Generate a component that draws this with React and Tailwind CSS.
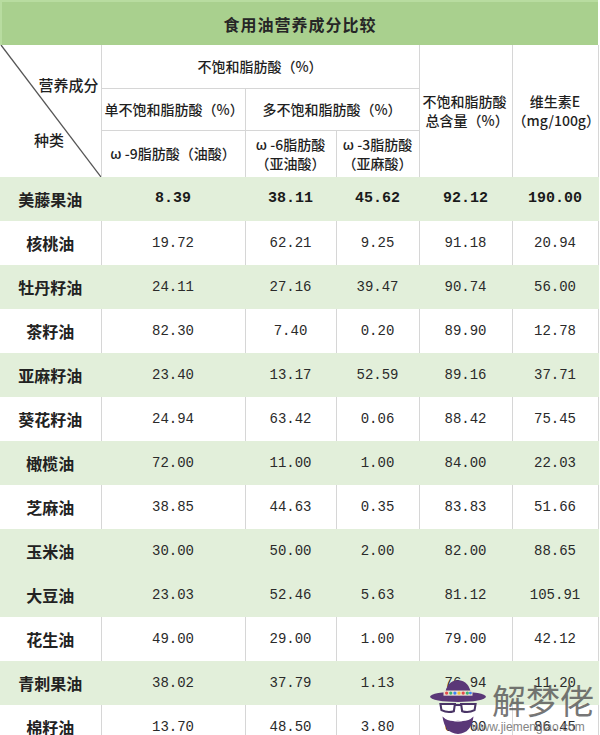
const rows = [
  ['美藤果油', '8.39', '38.11', '45.62', '92.12', '190.00'],
  ['核桃油', '19.72', '62.21', '9.25', '91.18', '20.94'],
  ['牡丹籽油', '24.11', '27.16', '39.47', '90.74', '56.00'],
  ['茶籽油', '82.30', '7.40', '0.20', '89.90', '12.78'],
  ['亚麻籽油', '23.40', '13.17', '52.59', '89.16', '37.71'],
  ['葵花籽油', '24.94', '63.42', '0.06', '88.42', '75.45'],
  ['橄榄油', '72.00', '11.00', '1.00', '84.00', '22.03'],
  ['芝麻油', '38.85', '44.63', '0.35', '83.83', '51.66'],
  ['玉米油', '30.00', '50.00', '2.00', '82.00', '88.65'],
  ['大豆油', '23.03', '52.46', '5.63', '81.12', '105.91'],
  ['花生油', '49.00', '29.00', '1.00', '79.00', '42.12'],
  ['青刺果油', '38.02', '37.79', '1.13', '76.94', '11.20'],
  ['棉籽油', '13.70', '48.50', '3.80', '66.00', '86.45'],
]

// rows with the light green band
const green = [0, 2, 4, 6, 8, 9, 11]

const cjk = { fontFamily: '"Noto Sans CJK SC", "Noto Sans", sans-serif' }
const mono = { fontFamily: '"Liberation Mono", "Noto Sans CJK SC", monospace' }

function Watermark() {
  return (
    <div className="absolute right-[6px] bottom-0 flex items-end gap-1 pointer-events-none">
      <svg width="60" height="60" viewBox="0 0 58 58">
        {/* hat */}
        <path d="M16 20 Q18 5 29 5 Q40 5 42 20 Z" fill="#5a3777" />
        <ellipse cx="29" cy="21" rx="27" ry="5" fill="#5a3777" />
        <rect x="15" y="15" width="28" height="5" fill="#e9e0d0" />
        <circle cx="18" cy="17.5" r="1.6" fill="#e64b4b" />
        <circle cx="22" cy="17.5" r="1.6" fill="#3cb371" />
        <circle cx="26" cy="17.5" r="1.6" fill="#3b82f6" />
        <circle cx="30" cy="17.5" r="1.6" fill="#f2c230" />
        <circle cx="34" cy="17.5" r="1.6" fill="#e64b4b" />
        <circle cx="38" cy="17.5" r="1.6" fill="#3cb371" />
        <circle cx="41" cy="17.5" r="1.4" fill="#3b82f6" />
        {/* glasses */}
        <path d="M12 28 L26 28 L25 35 Q19 37 13 34 Z" fill="none" stroke="#4a3566" strokeWidth="2" />
        <path d="M32 28 L46 28 L45 34 Q39 37 33 35 Z" fill="none" stroke="#4a3566" strokeWidth="2" />
        <path d="M26 29 L32 29" stroke="#4a3566" strokeWidth="2" />
        {/* beard */}
        <path d="M14 40 Q16 56 29 57 Q42 56 44 40 Q38 46 29 44 Q20 46 14 40 Z" fill="#5a3777" />
        <path d="M23 44 Q29 40 35 44 Q29 47 23 44 Z" fill="#ffffff" opacity="0.6" />
      </svg>
      <div className="flex flex-col items-start">
        <span className="text-[34px] leading-[38px] text-[#555] opacity-80" style={cjk}>解梦佬</span>
        <span className="text-[12px] leading-[16px] text-[#777] opacity-90 -ml-[20px]" style={{ fontFamily: '"Liberation Sans", sans-serif' }}>
          www.jiemenglao.com
        </span>
      </div>
    </div>
  )
}

export default function App() {
  const line = 'border-[#d6d6d6]'
  const head = 'text-[14px] font-medium text-[#1f1f1f]'

  return (
    <div className="relative w-[600px] h-[735px] overflow-hidden bg-white text-[#262626]">
      <div className="w-[598px] h-[45px] bg-[#a9d08e] border-l-[2px] border-t-[2px] border-[#b8dca0] flex items-center justify-center">
        <span className="text-[16px] font-bold tracking-[1px]" style={cjk}>食用油营养成分比较</span>
      </div>

      <table className="w-[598px] table-fixed border-collapse" style={cjk}>
        <colgroup>
          <col className="w-[101px]" />
          <col className="w-[144px]" />
          <col className="w-[91px]" />
          <col className="w-[83px]" />
          <col className="w-[93px]" />
          <col className="w-[86px]" />
        </colgroup>
        <thead>
          <tr className="h-[43px]">
            <th rowSpan={3} className={`relative p-0 border-r ${line} align-top font-medium`}>
              <svg className="absolute inset-0" width="101" height="132" viewBox="0 0 101 132">
                <line x1="1" y1="0" x2="101" y2="132" stroke="#555" strokeWidth="1.3" />
              </svg>
              <div className="relative flex flex-col text-[15px] text-[#1f1f1f]">
                <span className="self-end pr-[2px] pt-[30px] leading-[20px]">营养成分</span>
                <span className="self-start pl-[34px] pt-[35px] leading-[20px]">种类</span>
              </div>
            </th>
            <th colSpan={3} className={`border-b border-r ${line} ${head}`}>不饱和脂肪酸（%）</th>
            <th rowSpan={3} className={`border-r ${line} ${head} leading-[19px] text-left pl-[3px]`}>
              不饱和脂肪酸<br />
              <span className="pl-[3px]">总含量（%）</span>
            </th>
            <th rowSpan={3} className={`border-r ${line} ${head} leading-[19px]`}>
              维生素E<br />（mg/100g）
            </th>
          </tr>
          <tr className="h-[42px]">
            <th className={`border-b border-r ${line} ${head} text-left pl-[3px]`}>单不饱和脂肪酸（%）</th>
            <th colSpan={2} className={`border-b border-r ${line} ${head}`}>多不饱和脂肪酸（%）</th>
          </tr>
          <tr className="h-[47px]">
            <th className={`border-r ${line} ${head}`}>ω -9脂肪酸（油酸）</th>
            <th className={`border-r ${line} ${head} leading-[19px]`}>ω -6脂肪酸<br />（亚油酸）</th>
            <th className={`border-r ${line} ${head} leading-[19px]`}>ω -3脂肪酸<br />（亚麻酸）</th>
          </tr>
        </thead>
        <tbody>
          {rows.map((r, i) => {
            const isGreen = green.includes(i)
            const bold = i === 0
            return (
              <tr key={r[0]} className={`h-[44px] ${isGreen ? 'bg-[#e2efda]' : 'bg-white'}`}>
                <td className={`border-r ${isGreen ? 'border-[#e2efda]' : line} text-center text-[16px] font-bold text-[#222]`}>
                  {r[0]}
                </td>
                {r.slice(1).map((v, j) => (
                  <td
                    key={j}
                    className={`border-r ${isGreen ? 'border-[#e2efda]' : line} text-center ${bold ? 'text-[15px] font-bold text-[#1a1a1a]' : 'text-[14px] text-[#2a2a2a]'}`}
                    style={mono}
                  >
                    {v}
                  </td>
                ))}
              </tr>
            )
          })}
        </tbody>
      </table>

      <Watermark />
    </div>
  )
}
